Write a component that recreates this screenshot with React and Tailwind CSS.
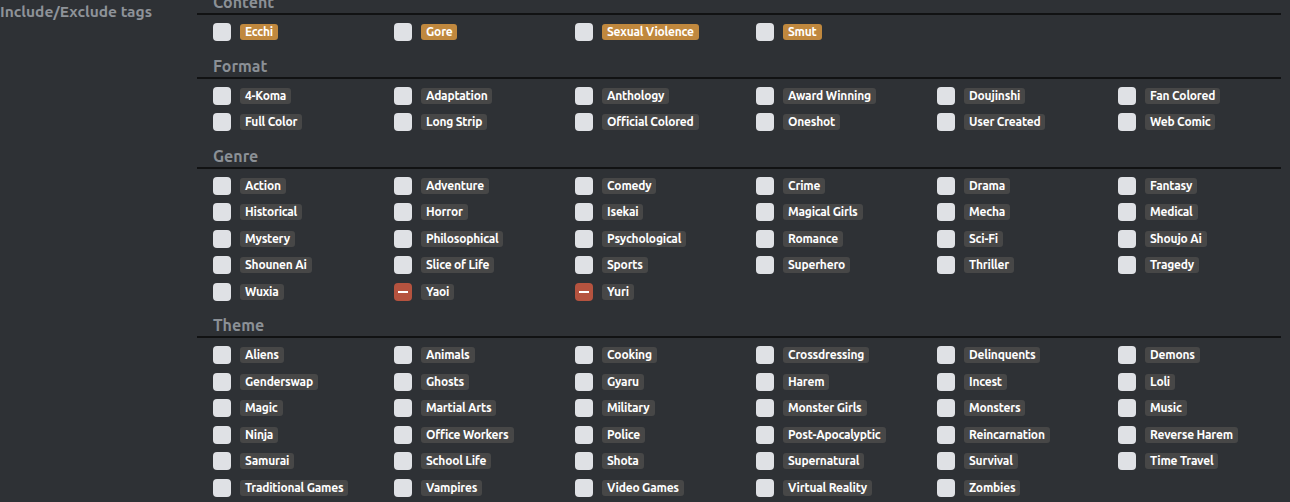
import React from 'react';

const sections = [
  { title: 'Content', tags: ['Ecchi', 'Gore', 'Sexual Violence', 'Smut'], tone: 'warn' },
  {
    title: 'Format',
    tags: ['4-Koma', 'Adaptation', 'Anthology', 'Award Winning', 'Doujinshi', 'Fan Colored', 'Full Color', 'Long Strip', 'Official Colored', 'Oneshot', 'User Created', 'Web Comic'],
  },
  {
    title: 'Genre',
    tags: ['Action', 'Adventure', 'Comedy', 'Crime', 'Drama', 'Fantasy', 'Historical', 'Horror', 'Isekai', 'Magical Girls', 'Mecha', 'Medical', 'Mystery', 'Philosophical', 'Psychological', 'Romance', 'Sci-Fi', 'Shoujo Ai', 'Shounen Ai', 'Slice of Life', 'Sports', 'Superhero', 'Thriller', 'Tragedy', 'Wuxia', 'Yaoi', 'Yuri'],
  },
  {
    title: 'Theme',
    tags: ['Aliens', 'Animals', 'Cooking', 'Crossdressing', 'Delinquents', 'Demons', 'Genderswap', 'Ghosts', 'Gyaru', 'Harem', 'Incest', 'Loli', 'Magic', 'Martial Arts', 'Military', 'Monster Girls', 'Monsters', 'Music', 'Ninja', 'Office Workers', 'Police', 'Post-Apocalyptic', 'Reincarnation', 'Reverse Harem', 'Samurai', 'School Life', 'Shota', 'Supernatural', 'Survival', 'Time Travel', 'Traditional Games', 'Vampires', 'Video Games', 'Virtual Reality', 'Zombies'],
  },
];

// tags set to "exclude"
const excluded = ['Yaoi', 'Yuri'];

const TagOption = ({ name, warn }) => {
  const isExcluded = excluded.includes(name);
  return (
    <label className="flex items-center gap-[9px] h-[18px] cursor-pointer">
      {isExcluded ? (
        <span className="w-[18px] h-[18px] rounded-[4px] bg-[#b5533f] flex items-center justify-center">
          <span className="w-[10px] h-[2px] bg-white"></span>
        </span>
      ) : (
        <span className="w-[18px] h-[18px] rounded-[4px] bg-[#dfe1e5]"></span>
      )}
      <span
        className={
          warn
            ? 'h-[16px] px-[5px] rounded-[3px] bg-[#c0883e] text-white text-[12px] leading-[16px] font-bold tracking-[-0.2px]'
            : 'h-[16px] px-[5px] rounded-[3px] bg-[#474747] text-white text-[12px] leading-[16px] font-bold tracking-[-0.2px]'
        }
      >
        {name}
      </span>
    </label>
  );
};

export default function App() {
  return (
    <div className="w-[1290px] h-[502px] overflow-hidden bg-[#2e3135] font-['Ubuntu','Noto_Sans',sans-serif]">
      <div className="flex">
        {/* Left: field label */}
        <div className="w-[197px] shrink-0 mt-[-1px]">
          <span className="text-[15.5px] leading-[20px] font-semibold text-[#8e9399]">Include/Exclude tags</span>
        </div>

        {/* Right: tag groups */}
        <div className="w-[1084px] mt-[-10px] flex flex-col gap-[12.5px]">
          {sections.map((section) => (
            <div key={section.title}>
              <div className="h-[25px] border-b-2 border-[#111213] pl-4">
                <span className="text-[16px] leading-[20px] font-bold text-[#8b9096]">{section.title}</span>
              </div>
              <div className="pl-4 pt-[8px] grid grid-cols-[repeat(6,181px)] gap-y-[8.5px]">
                {section.tags.map((tag) => (
                  <TagOption key={tag} name={tag} warn={section.tone === 'warn'} />
                ))}
              </div>
            </div>
          ))}
        </div>
      </div>
    </div>
  );
}
